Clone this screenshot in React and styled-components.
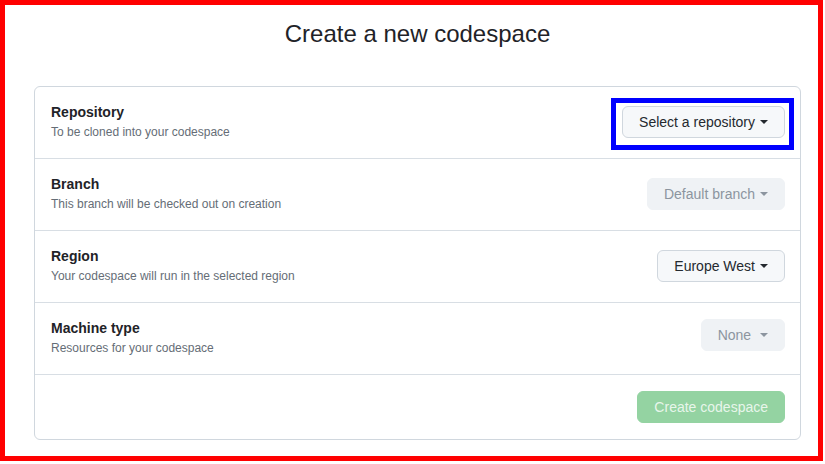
import React from "react";
import styled, { createGlobalStyle } from "styled-components";

const GlobalStyle = createGlobalStyle`
  html, body {
    margin: 0;
    padding: 0;
    background: #ffffff;
  }
  body {
    font-family: "Liberation Sans", Arial, sans-serif;
    color: #1f2328;
  }
`;

const rows = [
  {
    title: "Repository",
    desc: "To be cloned into your codespace",
    label: "Select a repository",
    highlight: true,
  },
  {
    title: "Branch",
    desc: "This branch will be checked out on creation",
    label: "Default branch",
    disabled: true,
  },
  {
    title: "Region",
    desc: "Your codespace will run in the selected region",
    label: "Europe West",
  },
  {
    title: "Machine type",
    desc: "Resources for your codespace",
    label: "None\u00a0",
    disabled: true,
    raised: true,
  },
];

export default function App() {
  return (
    <>
      <GlobalStyle />
      <Frame>
        <Title>Create a new codespace</Title>
        <Card>
          {rows.map((row) => (
            <Row key={row.title}>
              <Info>
                <RowTitle>{row.title}</RowTitle>
                <RowDesc>{row.desc}</RowDesc>
              </Info>
              <Highlight $on={row.highlight} $raised={row.raised}>
                <SelectButton disabled={row.disabled}>
                  {row.label}
                  <Caret />
                </SelectButton>
              </Highlight>
            </Row>
          ))}
          <Footer>
            <CreateButton disabled>Create codespace</CreateButton>
          </Footer>
        </Card>
      </Frame>
    </>
  );
}

const Frame = styled.div`
  box-sizing: border-box;
  width: 823px;
  height: 461px;
  border: 5px solid #ff0000;
  padding: 14px 17px 0 29px;
  display: flex;
  flex-direction: column;
`;

const Title = styled.h1`
  margin: 0 0 37px;
  font-size: 24px;
  line-height: 30px;
  font-weight: 400;
  text-align: center;
  color: #1f2328;
`;

const Card = styled.div`
  border: 1px solid #d0d7de;
  border-radius: 6px;
  display: flex;
  flex-direction: column;
`;

const Row = styled.div`
  display: flex;
  align-items: center;
  justify-content: space-between;
  padding: 15px 15px 17px 16px;
  border-bottom: 1px solid #d8dee4;
`;

const Info = styled.div`
  display: flex;
  flex-direction: column;
`;

const RowTitle = styled.div`
  font-size: 14px;
  line-height: 21px;
  font-weight: 700;
  color: #1f2328;
`;

const RowDesc = styled.div`
  font-size: 12px;
  line-height: 18px;
  color: #656d76;
`;

const Highlight = styled.div`
  position: relative;
  display: flex;
  margin-top: ${({ $raised }) => ($raised ? "-6px" : "1px")};

  &::after {
    content: "";
    display: ${({ $on }) => ($on ? "block" : "none")};
    position: absolute;
    left: -11px;
    top: -8px;
    width: 183px;
    height: 52px;
    box-sizing: border-box;
    border: 5px solid #0000ff;
    pointer-events: none;
  }
`;

const SelectButton = styled.button`
  box-sizing: border-box;
  height: 32px;
  padding: 0 16px;
  display: inline-flex;
  align-items: center;
  font-family: "Liberation Sans", Arial, sans-serif;
  font-size: 14px;
  color: ${({ disabled }) => (disabled ? "#8c959f" : "#24292f")};
  background: ${({ disabled }) => (disabled ? "#eff2f5" : "#f6f8fa")};
  border: 1px solid ${({ disabled }) => (disabled ? "#eff2f5" : "#d0d7de")};
  border-radius: 6px;
  cursor: ${({ disabled }) => (disabled ? "default" : "pointer")};
`;

const Caret = styled.span`
  display: inline-block;
  width: 0;
  height: 0;
  margin-left: 5px;
  border-top: 4px solid currentColor;
  border-left: 4px solid transparent;
  border-right: 4px solid transparent;
`;

const Footer = styled.div`
  display: flex;
  justify-content: flex-end;
  padding: 16px 15px 16px 16px;
`;

const CreateButton = styled.button`
  box-sizing: border-box;
  height: 32px;
  padding: 0 16px;
  font-family: "Liberation Sans", Arial, sans-serif;
  font-size: 14px;
  color: rgba(255, 255, 255, 0.8);
  background: #94d3a2;
  border: 1px solid #94d3a2;
  border-radius: 6px;
`;
